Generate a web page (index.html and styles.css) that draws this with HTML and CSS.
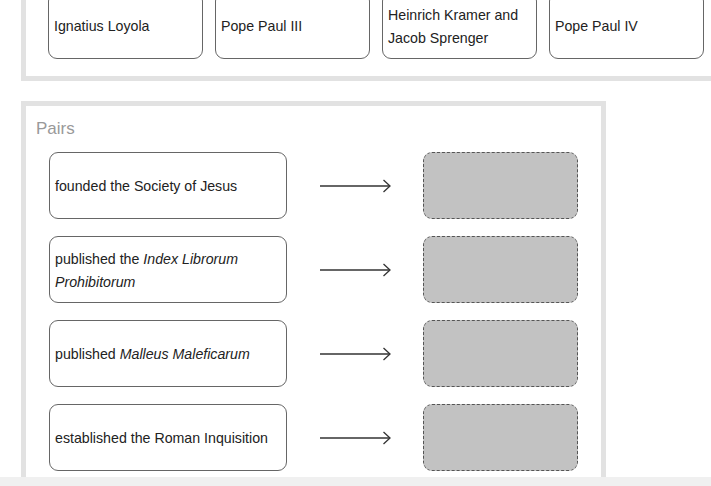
FILE: index.html
```html
<!DOCTYPE html>
<html>
<head>
<meta charset="utf-8">
<link rel="stylesheet" href="styles.css">
</head>
<body>
<div class="page">
  <section class="panel bank">
    <div class="bank-row">
      <div class="card tile"><span>Ignatius Loyola</span></div>
      <div class="card tile"><span>Pope Paul III</span></div>
      <div class="card tile"><span>Heinrich Kramer and Jacob Sprenger</span></div>
      <div class="card tile"><span>Pope Paul IV</span></div>
    </div>
  </section>
  <section class="panel pairs">
    <h2 class="pairs-title">Pairs</h2>
    <div class="pair-list">
      <div class="pair">
        <div class="card prompt"><span>founded the Society of Jesus</span></div>
        <div class="arrow"><svg width="72" height="14" viewBox="0 0 72 14"><line x1="0" y1="7" x2="70" y2="7"/><polyline points="63.5,1 70,7 63.5,13"/></svg></div>
        <div class="drop"></div>
      </div>
      <div class="pair">
        <div class="card prompt"><span>published the <i>Index Librorum Prohibitorum</i></span></div>
        <div class="arrow"><svg width="72" height="14" viewBox="0 0 72 14"><line x1="0" y1="7" x2="70" y2="7"/><polyline points="63.5,1 70,7 63.5,13"/></svg></div>
        <div class="drop"></div>
      </div>
      <div class="pair">
        <div class="card prompt"><span>published <i>Malleus Maleficarum</i></span></div>
        <div class="arrow"><svg width="72" height="14" viewBox="0 0 72 14"><line x1="0" y1="7" x2="70" y2="7"/><polyline points="63.5,1 70,7 63.5,13"/></svg></div>
        <div class="drop"></div>
      </div>
      <div class="pair">
        <div class="card prompt"><span>established the Roman Inquisition</span></div>
        <div class="arrow"><svg width="72" height="14" viewBox="0 0 72 14"><line x1="0" y1="7" x2="70" y2="7"/><polyline points="63.5,1 70,7 63.5,13"/></svg></div>
        <div class="drop"></div>
      </div>
    </div>
  </section>
</div>
<div class="bottom-strip"></div>
</body>
</html>
```
FILE: styles.css
```css
html, body {
  margin: 0;
  padding: 0;
  background: #fff;
  overflow: hidden;
  height: 486px;
}
body {
  font-family: "Liberation Sans", Arial, sans-serif;
  font-size: 14.2px;
  color: #222;
}
.page {
  padding-left: 21px;
  width: 690px;
  overflow: hidden;
}
.panel {
  border: 5px solid #e2e2e2;
  background: #fff;
  box-sizing: border-box;
}
.bank {
  margin-top: -29px;
  width: 740px;
  padding: 16px 0 17px 22px;
}
.bank-row {
  display: flex;
  gap: 12px;
}
.card {
  box-sizing: border-box;
  height: 67px;
  border: 1px solid #666;
  border-radius: 9px;
  background: #fff;
  display: flex;
  align-items: center;
  padding: 2px 5px 0 5px;
  line-height: 23px;
}
.tile {
  width: 155px;
  flex: none;
}
.pairs {
  margin-top: 20px;
  width: 585px;
  padding: 13px 0 20px 10px;
}
.pairs-title {
  margin: 0 0 13px 0;
  font-size: 17px;
  font-weight: normal;
  line-height: 20px;
  color: #999;
}
.pair-list {
  display: flex;
  flex-direction: column;
  gap: 17px;
  padding-left: 13px;
}
.pair {
  display: grid;
  grid-template-columns: 238px 136px 155px;
  align-items: center;
}
.prompt {
  width: 238px;
}
.arrow {
  display: flex;
  justify-content: center;
  padding-left: 1px;
}
.arrow svg {
  display: block;
  fill: none;
  stroke: #333;
  stroke-width: 1.3;
}
.drop {
  box-sizing: border-box;
  height: 67px;
  background: #c2c2c2;
  border: 1px dashed #555;
  border-radius: 9px;
}
.bottom-strip {
  position: fixed;
  left: 0;
  right: 0;
  bottom: 0;
  height: 9px;
  background: #f0f0f0;
}
```
